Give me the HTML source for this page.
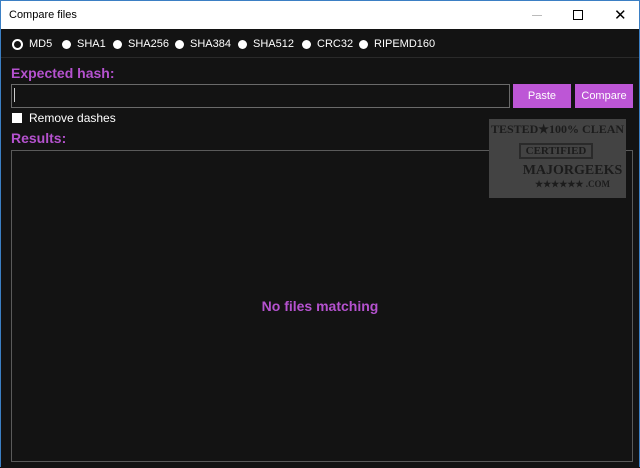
<!DOCTYPE html>
<html><head><style>
body{margin:0;width:640px;height:468px;overflow:hidden;font-family:"Liberation Sans",sans-serif;background:#131313;position:relative}
.win{position:absolute;left:0;top:0;width:638px;height:466px;border:1px solid #3b7fc4;border-bottom:none;background:#131313}
.title{position:absolute;left:0;top:0;width:638px;height:28px;background:#fff;font-size:11px;color:#000}
.title span{position:absolute;left:8px;top:8px}
.ab{position:absolute;color:#fff;font-size:11px}
.rad{position:absolute;top:39px;width:9px;height:9px;border-radius:50%;background:#fff}
.sep{position:absolute;left:0;top:56px;width:638px;height:1px;background:#2a2a2a}
.purple{color:#b552cf;position:absolute;font-size:14px;font-weight:bold}
.btn{position:absolute;top:83px;height:24px;background:#bd56d6;color:#fff;font-size:11px;text-align:center;line-height:24px}
</style></head><body>
<div class="win">
<div class="title"><span>Compare files</span>
<div style="position:absolute;left:531px;top:14px;width:10px;height:1px;background:#bbb"></div>
<div style="position:absolute;left:572px;top:9px;width:8px;height:8px;border:1px solid #000"></div>
<div style="position:absolute;left:613px;top:5px;font-size:15px">✕</div>
</div>
<div style="position:absolute;left:11px;top:38px;width:7px;height:7px;border:2px solid #fff;border-radius:50%"></div>
<span class="ab" style="left:28px;top:37px">MD5</span>
<div class="rad" style="left:61px"></div><span class="ab" style="left:76px;top:37px">SHA1</span>
<div class="rad" style="left:112px"></div><span class="ab" style="left:127px;top:37px">SHA256</span>
<div class="rad" style="left:174px"></div><span class="ab" style="left:189px;top:37px">SHA384</span>
<div class="rad" style="left:237px"></div><span class="ab" style="left:252px;top:37px">SHA512</span>
<div class="rad" style="left:301px"></div><span class="ab" style="left:316px;top:37px">CRC32</span>
<div class="rad" style="left:358px"></div><span class="ab" style="left:373px;top:37px">RIPEMD160</span>
<div class="sep"></div>
<div class="purple" style="left:10px;top:64px">Expected hash:</div>
<div style="position:absolute;left:10px;top:83px;width:497px;height:22px;border:1px solid #6a6a6a;background:#131313"></div>
<div style="position:absolute;left:13px;top:87px;width:1px;height:14px;background:#ccc"></div>
<div class="btn" style="left:512px;width:58px">Paste</div>
<div class="btn" style="left:574px;width:58px">Compare</div>
<div style="position:absolute;left:11px;top:112px;width:10px;height:10px;background:#fff"></div>
<span class="ab" style="left:28px;top:110px;font-size:12px">Remove dashes</span>
<div class="purple" style="left:10px;top:129px">Results:</div>
<div style="position:absolute;left:10px;top:149px;width:620px;height:310px;border:1px solid #5a5a5a"></div>
<div style="position:absolute;left:488px;top:118px;width:137px;height:79px;background:#434343;color:#1c1c1c;font-family:'Liberation Serif',serif;font-weight:bold;text-align:center">
<div style="font-size:12px;margin-top:3px">TESTED★100% CLEAN</div>
<div style="font-size:11px;margin:6px 0 0 30px;border:2px solid #2a2a2a;width:70px">CERTIFIED</div>
<div style="font-size:14px;margin:4px 0 0 30px">MAJORGEEKS</div>
<div style="font-size:9px;margin-left:30px">★★★★★★ .COM</div>
</div>
<div style="position:absolute;left:0;width:638px;top:297px;text-align:center;color:#b552cf;font-size:14px;font-weight:bold">No files matching</div>
</div>
</body></html>
